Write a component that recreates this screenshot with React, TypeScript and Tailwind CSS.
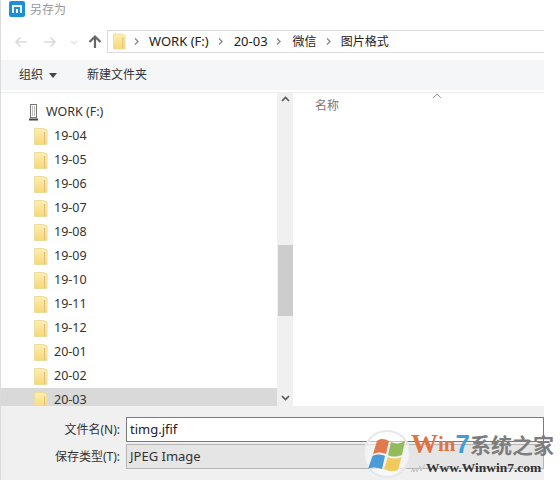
const font = { fontFamily: '"Noto Sans", "Noto Sans CJK SC", sans-serif' };

function Folder({ className = "" }: { className?: string }) {
  return (
    <svg width="14" height="17" viewBox="0 0 14 17" className={`shrink-0 ${className}`}>
      <defs>
        <linearGradient id="fg" x1="0" y1="0" x2="0" y2="1">
          <stop offset="0" stopColor="#fdeeb0" />
          <stop offset="1" stopColor="#f8d778" />
        </linearGradient>
      </defs>
      <path d="M0.5 0.5H9L13 2V16.5H0.5Z" fill="url(#fg)" stroke="#eedb9e" />
      <path d="M10.5 4V16" stroke="#dcc27a" />
    </svg>
  );
}

function Chevron() {
  return (
    <svg width="7" height="9" viewBox="0 0 7 9" className="block shrink-0">
      <path d="M2 1.5L5 4.5L2 7.5" fill="none" stroke="#8a8a8a" strokeWidth="1.4" />
    </svg>
  );
}

const folders = ["19-04", "19-05", "19-06", "19-07", "19-08", "19-09", "19-10", "19-11", "19-12", "20-01", "20-02", "20-03"];

function TreeRow({ name, selected }: { name: string; selected?: boolean }) {
  return (
    <div className={`flex h-[24px] shrink-0 items-center gap-[6px] pl-[33px] ${selected ? "bg-[#d9d9d9]" : ""}`}>
      <Folder />
      <span className="text-[12.5px] text-[#333]">{name}</span>
    </div>
  );
}

function Watermark() {
  return (
    <div className="absolute left-[363px] top-[430px] flex h-[50px] w-[192px]">
      <div className="h-[48px] w-[48px] shrink-0 rounded-full border-2 border-[#e4e8ea] bg-white/55">
        <svg width="44" height="44" viewBox="0 0 44 44">
          <path d="M12 9C16 6 20 7 24 9L21 22C16 20 12 20 8 22Z" fill="#e0794e" />
          <path d="M26 10C30 12 35 12 40 9L37 23C32 25 27 25 23 23Z" fill="#93bb5a" />
          <path d="M7.500 24C11 22 16 22 20 24L17 37C12 35 7 35 3 37Z" fill="#4a9bd8" />
          <path d="M23 25C27 27 32 27 36.500 25L33 38C28 40 23 39 19 37Z" fill="#f2c95c" />
        </svg>
      </div>
      <div className="flex flex-col pt-[2px]">
        <div className="flex h-[24px] items-end whitespace-nowrap">
          <span className="text-[27px] font-bold leading-[24px] text-[#dd7442]" style={{ fontFamily: '"Liberation Serif", serif' }}>W</span>
          <span className="text-[21px] font-bold leading-[24px] text-[#dd7442]" style={{ fontFamily: '"Liberation Serif", serif' }}>in</span>
          <span className="text-[26px] font-bold leading-[24px] text-[#3f9ed6]" style={{ fontFamily: '"Liberation Sans", sans-serif' }}>7</span>
          <span className="text-[21px] font-bold leading-[24px] text-[#7d7d7d]" style={{ fontFamily: '"Noto Sans CJK SC", sans-serif' }}>系统之家</span>
        </div>
        <div className="mt-[5px] flex items-center">
          <svg width="15" height="10" viewBox="0 0 15 10" className="shrink-0">
            <path d="M0 9L2 6L3 9L5 5L6 9L9 3L10 8L14 1" fill="none" stroke="#c4c4c4" />
          </svg>
          <span className="text-[13.5px] font-bold leading-none text-[#333]" style={{ fontFamily: '"Liberation Serif", serif' }}>
            Www.Winwin7.com
          </span>
        </div>
      </div>
    </div>
  );
}

export default function App() {
  return (
    <div className="relative flex h-[480px] w-[560px] flex-col overflow-hidden bg-white" style={font}>
      <div className="flex h-[480px] w-[544px] flex-col border-l border-[#dcdcdc]">
        {/* title */}
        <div className="flex h-[18px] shrink-0 items-start gap-[5px] pl-[8px] pt-[1px]">
          <div className="flex h-[16px] w-[16px] items-center justify-center rounded-[2px] bg-[#1d8fd8]">
            <svg width="10" height="8" viewBox="0 0 10 8">
              <path d="M1 8V1H9V8" fill="none" stroke="#fff" strokeWidth="1.8" />
              <path d="M5 4V8" stroke="#fff" strokeWidth="2" />
            </svg>
          </div>
          <span className="text-[12px] leading-[17px] text-[#999]">另存为</span>
        </div>

        {/* nav */}
        <div className="mt-[12px] flex h-[23px] shrink-0 items-center">
          <svg width="106" height="23" viewBox="0 0 106 23" className="shrink-0">
            <path d="M26 12H15M19.500 7.500L15 12L19.500 16.500" fill="none" stroke="#dadada" strokeWidth="1.6" />
            <path d="M43 12H54M49.500 7.500L54 12L49.500 16.500" fill="none" stroke="#dadada" strokeWidth="1.6" />
            <path d="M70 11L73 14L76 11" fill="none" stroke="#e0e0e0" strokeWidth="1.2" />
            <path d="M94 18V6.500M88.500 12L94 6.500L99.500 12" fill="none" stroke="#666" strokeWidth="2.2" />
          </svg>
          <div className="flex h-[23px] flex-1 items-center border-y border-l border-[#d9d9d9] pl-[5px] text-[12px] text-[#222]">
            <Folder className="w-[13px]" />
            <span className="ml-[7px]"><Chevron /></span>
            <span className="ml-[9px] text-[13px]">WORK (F:)</span>
            <span className="ml-[8px]"><Chevron /></span>
            <span className="ml-[10px] text-[13px]">20-03</span>
            <span className="ml-[7px]"><Chevron /></span>
            <span className="ml-[11px]">微信</span>
            <span className="ml-[8px]"><Chevron /></span>
            <span className="ml-[9px]">图片格式</span>
          </div>
        </div>

        {/* toolbar */}
        <div className="mt-[7px] flex h-[30px] shrink-0 items-center bg-[#f5f6f7] pl-[18px] text-[12px] text-[#333]">
          <span>组织</span>
          <svg width="8" height="5" viewBox="0 0 8 5" className="ml-[6px]">
            <path d="M0 0H8L4 5Z" fill="#444" />
          </svg>
          <span className="ml-[30px]">新建文件夹</span>
        </div>

        {/* body */}
        <div className="mt-[2px] flex min-h-0 flex-1 border-t border-[#eeeeee]">
          <div className="flex w-[276px] shrink-0 flex-col overflow-hidden pt-[7px]">
            <div className="flex h-[24px] shrink-0 items-center gap-[7px] pl-[27px] text-[12.5px] text-[#333]">
              <svg width="11" height="18" viewBox="0 0 11 18">
                <rect x="2.500" y="1.500" width="6" height="13" fill="#fff" stroke="#777" />
                <path d="M4.500 3V13M6.500 3V13" stroke="#bbb" />
                <path d="M1 16.500H10" stroke="#444" strokeWidth="2" />
              </svg>
              <span>WORK (F:)</span>
            </div>
            {folders.map((f) => (
              <TreeRow key={f} name={f} selected={f === "20-03"} />
            ))}
          </div>
          <div className="flex w-[16px] shrink-0 flex-col items-center justify-between bg-[#f0f0f0] py-[3px]">
            <svg width="9" height="6" viewBox="0 0 9 6"><path d="M1 5L4.500 1.500L8 5" fill="none" stroke="#555" strokeWidth="1.6" /></svg>
            <svg width="9" height="6" viewBox="0 0 9 6" className="mb-[2px]"><path d="M1 1L4.500 4.500L8 1" fill="none" stroke="#555" strokeWidth="1.6" /></svg>
          </div>
          <div className="relative flex-1 pl-[22px] pt-[4px] text-[12px] text-[#777]">
            <span>名称</span>
            <svg width="10" height="6" viewBox="0 0 10 6" className="absolute left-[139px] top-0">
              <path d="M1 5L5 1L9 5" fill="none" stroke="#999" />
            </svg>
          </div>
        </div>

        {/* footer */}
        <div className="flex h-[74px] shrink-0 flex-col gap-[2px] bg-[#f0f0f0] pt-[11px] text-[12px] text-[#333]">
          <div className="flex h-[25px] items-center">
            <span className="w-[125px] pr-[6px] text-right">文件名(N):</span>
            <div className="flex h-[25px] flex-1 items-center border border-[#7a7a7a] bg-white pl-[3px] text-[13px] text-[#222]">timg.jfif</div>
          </div>
          <div className="flex h-[25px] items-center">
            <span className="w-[125px] pr-[6px] text-right">保存类型(T):</span>
            <div className="flex h-[25px] flex-1 items-center border border-[#b5b5b5] bg-[#e5e5e5] pl-[3px] text-[13px] text-[#333]">JPEG Image</div>
          </div>
        </div>
      </div>

      {/* scrollbar thumb lies over the track */}
      <div className="absolute left-[278px] top-[245px] h-[71px] w-[15px] bg-[#cdcdcd]" />
      <Watermark />
    </div>
  );
}
